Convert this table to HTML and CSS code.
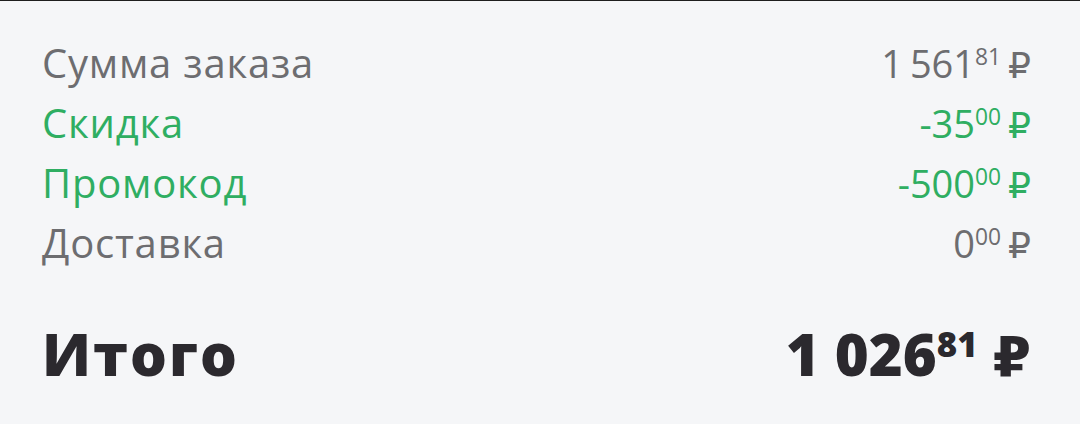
FILE: index.html
```html
<!DOCTYPE html>
<html lang="ru">
<head>
<meta charset="utf-8">
<title>Итого</title>
<link rel="stylesheet" href="styles.css">
</head>
<body>
<div class="summary">
  <div class="rows">
    <div class="row">
      <span class="label">Сумма заказа</span>
      <span class="amount">1 561<span class="cents">81</span> <span class="rub">₽</span></span>
    </div>
    <div class="row discount">
      <span class="label">Скидка</span>
      <span class="amount">-35<span class="cents">00</span> <span class="rub">₽</span></span>
    </div>
    <div class="row discount">
      <span class="label">Промокод</span>
      <span class="amount">-500<span class="cents">00</span> <span class="rub">₽</span></span>
    </div>
    <div class="row">
      <span class="label">Доставка</span>
      <span class="amount">0<span class="cents">00</span> <span class="rub">₽</span></span>
    </div>
  </div>
  <div class="row total">
    <span class="label">Итого</span>
    <span class="amount">1 026<span class="cents">81</span> <span class="rub">₽</span></span>
  </div>
</div>
</body>
</html>
```
FILE: styles.css
```css
html, body {
  margin: 0;
  padding: 0;
  background: #f5f6f8;
}

body {
  border-top: 1px solid #1e1e1e;
  font-family: "Open Sans", "DejaVu Sans", sans-serif;
}

.summary {
  padding: 32px 49px 0 42px;
}

.rows {
  display: flex;
  flex-direction: column;
}

.row {
  display: flex;
  justify-content: space-between;
  align-items: baseline;
  font-size: 38px;
  line-height: 60px;
  color: #6d6d70;
}

.row .label {
  font-size: 40px;
  letter-spacing: 0.8px;
}

.row .amount {
  word-spacing: -3px;
}

.row.discount {
  color: #2fae62;
}

.cents {
  font-size: 0.6em;
  line-height: 0;
  vertical-align: 0.55em;
}

.rub {
  font-family: "DejaVu Sans", sans-serif;
  font-size: 0.95em;
  line-height: 0;
}

.row.total {
  margin-top: 45px;
  font-size: 58px;
  line-height: 72px;
  font-weight: 800;
  color: #2b292e;
}

.row.total .label {
  font-size: 58px;
  letter-spacing: 2px;
}

.row.total .amount {
  word-spacing: 0;
}
```
